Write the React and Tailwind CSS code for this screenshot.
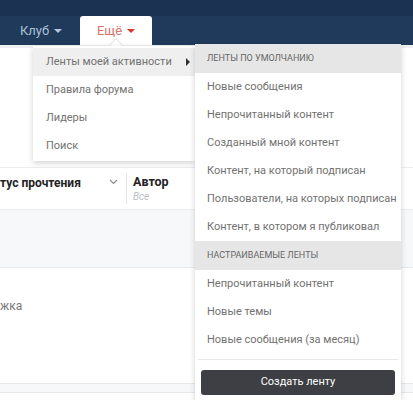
import React from 'react';

const defaultFeeds = [
  'Новые сообщения',
  'Непрочитанный контент',
  'Созданный мной контент',
  'Контент, на который подписан',
  'Пользователи, на которых подписан',
  'Контент, в котором я публиковал',
];

const customFeeds = ['Непрочитанный контент', 'Новые темы', 'Новые сообщения (за месяц)'];

function Caret({ className }) {
  return <span className={`inline-block h-0 w-0 border-x-[4px] border-t-[4px] border-x-transparent ${className}`} />;
}

export default function App() {
  return (
    <div
      className="relative h-[400px] w-[413px] overflow-hidden bg-white"
      style={{ fontFamily: 'Roboto, "Liberation Sans", sans-serif' }}
    >
      {/* Top nav */}
      <header className="bg-[#1b3252]">
        <div className="h-[16px]" />
        <nav className="flex h-[29px] items-stretch bg-[#203a5b]">
          <div className="flex w-[80px] items-center justify-center gap-[5px] pl-[2px] text-[13px] text-[#a8c0d8]">
            Клуб
            <Caret className="border-t-[#b4c6da]" />
          </div>
          <div className="flex w-[72px] items-center justify-center gap-[5px] rounded-t-[3px] bg-white text-[13px] text-[#d9736c]">
            Ещё
            <Caret className="border-t-[#d5372b]" />
          </div>
        </nav>
      </header>
      <div className="h-[3px] bg-[#eeeff1]" />

      {/* Page content behind menus */}
      <main className="flex flex-col">
        <div className="h-[119px]" />
        <div className="flex h-[43px] border-y border-[#ebedf0] bg-white">
          <div className="flex w-[126px] items-start pt-[6px]">
            <span className="flex-1 whitespace-nowrap text-[12px] font-bold text-[#222]">тус прочтения</span>
            <svg className="mr-[8px] mt-[5px]" width="9" height="6" viewBox="0 0 9 6" fill="none">
              <path d="M1 1l3.5 3.5L8 1" stroke="#8a8f96" strokeWidth="1.2" />
            </svg>
          </div>
          <div className="my-[5px] w-px bg-[#e4e6e9]" />
          <div className="flex flex-col pl-[6px] pt-[6px] leading-[15px]">
            <span className="text-[12.5px] font-bold text-[#222]">Автор</span>
            <span className="text-[10px] italic text-[#bbbec3]">Все</span>
          </div>
        </div>
        <div className="h-[58px] border-b border-[#e6e8eb] bg-[#f7f8fa]" />
        <div className="h-[115px] bg-white pt-[25px]">
          <span className="text-[12px] text-[#777]">жка</span>
        </div>
        <div className="h-[10px] border-y border-[#e6e8eb] bg-[#f7f8fa]" />
        <div className="flex-1 bg-white" />
      </main>

      {/* Notch under the Ещё tab */}
      <div className="absolute left-[111px] top-[40px] h-[10px] w-[10px] rotate-45 border-l border-t border-[#e5e5e5] bg-white" />

      {/* First dropdown */}
      <div className="absolute left-[33px] top-[46px] w-[162px] bg-white pb-[1px] text-[11px] text-[#727272] shadow-[0_2px_6px_rgba(0,0,0,0.18)]">
        <div className="mt-[2px] flex h-[28px] items-center justify-between bg-[#efefef] pl-[13px] pr-[5px]">
          <span>Ленты моей активности</span>
          <span className="inline-block h-0 w-0 border-y-[4px] border-l-[4px] border-y-transparent border-l-[#333]" />
        </div>
        <div className="flex h-[28px] items-center pl-[13px]">Правила форума</div>
        <div className="flex h-[28px] items-center pl-[13px]">Лидеры</div>
        <div className="flex h-[28px] items-center pl-[13px]">Поиск</div>
      </div>

      {/* Second dropdown */}
      <div className="absolute left-[195px] top-[44px] w-[206px] bg-white pb-[6px] text-[11px] text-[#727272] shadow-[0_2px_6px_rgba(0,0,0,0.18)]">
        <div className="flex h-[29px] items-center bg-[#e6e6e6] pl-[12px] text-[9px] uppercase text-[#666]">
          Ленты по умолчанию
        </div>
        {defaultFeeds.map((f) => (
          <div key={f} className="flex h-[28px] items-center whitespace-nowrap pl-[12px]">
            {f}
          </div>
        ))}
        <div className="flex h-[29px] items-center bg-[#e6e6e6] pl-[12px] text-[9px] uppercase text-[#666]">
          Настраиваемые ленты
        </div>
        {customFeeds.map((f) => (
          <div key={f} className="flex h-[28px] items-center whitespace-nowrap pl-[12px]">
            {f}
          </div>
        ))}
        <div className="mx-[3px] mt-[5px] border-t border-[#e8e8e8]" />
        <div className="px-[6px] pt-[10px]">
          <button className="flex h-[25px] w-full items-center justify-center rounded-[3px] bg-[#3d3f44] text-[11px] text-white">
            Создать ленту
          </button>
        </div>
      </div>
    </div>
  );
}
